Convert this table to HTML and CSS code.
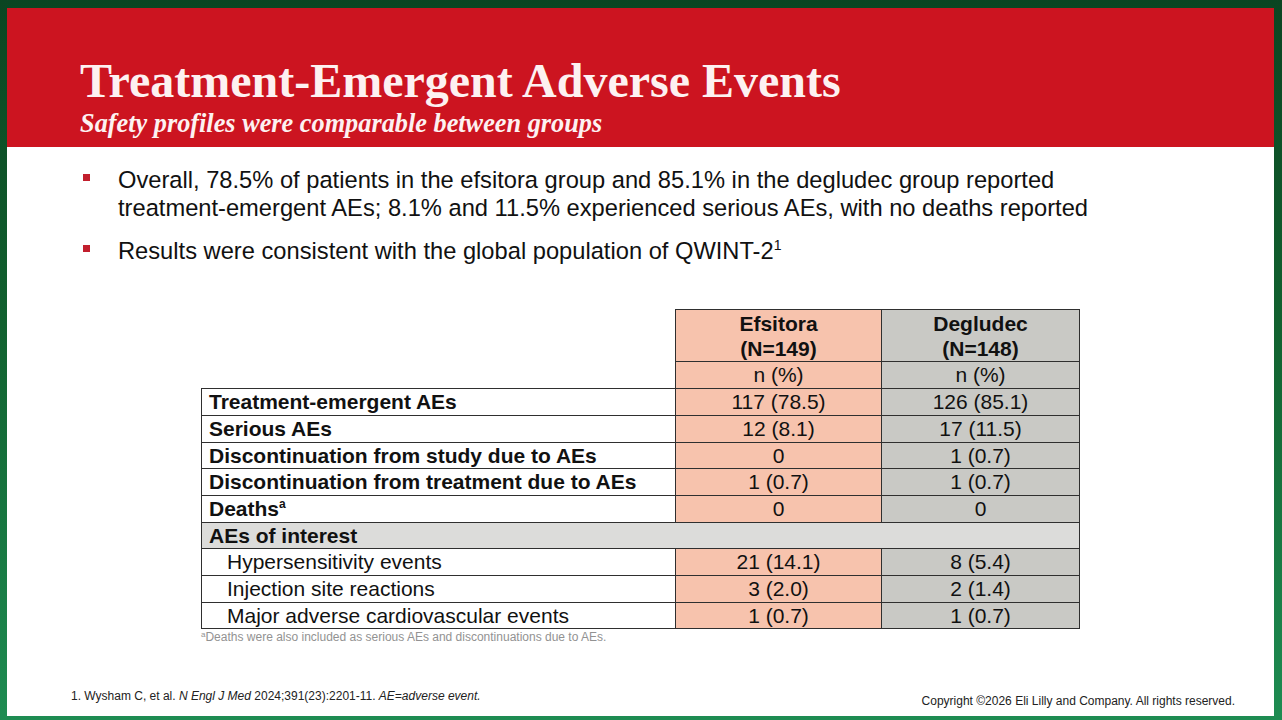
FILE: index.html
```html
<!DOCTYPE html>
<html lang="en">
<head>
<meta charset="utf-8">
<title>Treatment-Emergent Adverse Events</title>
<link rel="stylesheet" href="styles.css">
</head>
<body>
<div class="slide">
  <header class="banner">
    <h1 class="title">Treatment-Emergent Adverse Events</h1>
    <p class="subtitle">Safety profiles were comparable between groups</p>
  </header>
  <ul class="bullets">
    <li><span class="mark"></span><span>Overall, 78.5% of patients in the efsitora group and 85.1% in the degludec group reported treatment-emergent AEs; 8.1% and 11.5% experienced serious AEs, with no deaths reported</span></li>
    <li><span class="mark"></span><span>Results were consistent with the global population of QWINT-2<sup class="sup">1</sup></span></li>
  </ul>
  <div class="table-wrap">
    <table class="ae">
      <colgroup>
        <col class="c-label"><col class="c-efs"><col class="c-deg">
      </colgroup>
      <tr class="hrow">
        <td class="blank"></td>
        <th class="efs">Efsitora<br>(N=149)</th>
        <th class="deg">Degludec<br>(N=148)</th>
      </tr>
      <tr class="row">
        <td class="blank"></td>
        <td class="efs">n (%)</td>
        <td class="deg">n (%)</td>
      </tr>
      <tr class="row">
        <td class="label b">Treatment-emergent AEs</td>
        <td class="efs">117 (78.5)</td>
        <td class="deg">126 (85.1)</td>
      </tr>
      <tr class="row">
        <td class="label b">Serious AEs</td>
        <td class="efs">12 (8.1)</td>
        <td class="deg">17 (11.5)</td>
      </tr>
      <tr class="row short">
        <td class="label b">Discontinuation from study due to AEs</td>
        <td class="efs">0</td>
        <td class="deg">1 (0.7)</td>
      </tr>
      <tr class="row">
        <td class="label b">Discontinuation from treatment due to AEs</td>
        <td class="efs">1 (0.7)</td>
        <td class="deg">1 (0.7)</td>
      </tr>
      <tr class="row">
        <td class="label b">Deaths<sup class="supa">a</sup></td>
        <td class="efs">0</td>
        <td class="deg">0</td>
      </tr>
      <tr class="row short">
        <td class="label b group" colspan="3">AEs of interest</td>
      </tr>
      <tr class="row">
        <td class="label sub">Hypersensitivity events</td>
        <td class="efs">21 (14.1)</td>
        <td class="deg">8 (5.4)</td>
      </tr>
      <tr class="row">
        <td class="label sub">Injection site reactions</td>
        <td class="efs">3 (2.0)</td>
        <td class="deg">2 (1.4)</td>
      </tr>
      <tr class="row short">
        <td class="label sub">Major adverse cardiovascular events</td>
        <td class="efs">1 (0.7)</td>
        <td class="deg">1 (0.7)</td>
      </tr>
    </table>
    <p class="note"><sup class="supn">a</sup>Deaths were also included as serious AEs and discontinuations due to AEs.</p>
  </div>
  <footer class="foot">
    <p class="ref">1. Wysham C, et al. <i>N Engl J Med</i> 2024;391(23):2201-11. <i>AE=adverse event.</i></p>
    <p class="copy">Copyright ©2026 Eli Lilly and Company. All rights reserved.</p>
  </footer>
</div>
</body>
</html>
```
FILE: styles.css
```css
html, body {
  margin: 0;
  padding: 0;
}
body {
  width: 1282px;
  height: 720px;
  overflow: hidden;
  background: linear-gradient(180deg, #0b4522 0%, #11612f 45%, #1e8c52 100%);
  font-family: "Liberation Sans", Arial, sans-serif;
}
.slide {
  margin: 8px 8px 0 7px;
  width: 1267px;
  height: 708px;
  background: #ffffff;
  display: flex;
  flex-direction: column;
}
.banner {
  background: #cc1420;
  height: 139px;
  box-sizing: border-box;
  padding: 49px 0 0 73px;
  color: #fdf1f1;
  font-family: "Liberation Serif", "Times New Roman", serif;
}
.title {
  margin: 0;
  font-size: 48px;
  line-height: 48px;
  font-weight: bold;
}
.subtitle {
  margin: 6px 0 0 0;
  font-size: 26.3px;
  line-height: 26px;
  font-weight: bold;
  font-style: italic;
}
.bullets {
  list-style: none;
  margin: 0;
  padding: 19px 174px 0 76px;
  display: flex;
  flex-direction: column;
  gap: 15px;
  font-size: 23.7px;
  line-height: 28px;
  color: #111;
}
.bullets li {
  display: grid;
  grid-template-columns: 35px 1fr;
}
.mark {
  width: 7px;
  height: 7px;
  margin-top: 8px;
  background: #c21f2d;
}
.sup {
  font-size: 14px;
  vertical-align: 9px;
  line-height: 0;
}
.table-wrap {
  padding: 44px 0 0 194px;
}
.ae {
  border-collapse: collapse;
  table-layout: fixed;
  width: 878px;
  font-size: 21px;
  color: #111;
}
.c-label { width: 474px; }
.c-efs { width: 206px; }
.c-deg { width: 198px; }
.ae td, .ae th {
  padding: 0;
  border: 1.5px solid #2f2f2f;
  text-align: center;
  font-weight: normal;
  line-height: 26px;
  height: 27px;
  box-sizing: border-box;
}
.ae tr.short td {
  height: 26px;
  line-height: 25px;
}
.ae td.blank {
  border: none;
  background: transparent;
}
.hrow th {
  font-weight: bold;
  height: 52px;
  line-height: 25px;
  padding-top: 1px;
}
.ae .efs { background: #f7c3ad; }
.ae .deg { background: #c9c9c5; }
.ae td.label {
  text-align: left;
  padding-left: 7px;
  background: #ffffff;
}
.ae td.b { font-weight: bold; }
.ae td.sub { padding-left: 25px; }
.ae td.group { background: #dcdcda; }
.supa {
  font-size: 12px;
  vertical-align: 8px;
  line-height: 0;
}
.note {
  margin: 1px 0 0 0;
  font-size: 12px;
  line-height: 14px;
  color: #929292;
}
.supn {
  font-size: 8px;
  vertical-align: 4px;
  line-height: 0;
}
.foot {
  margin-top: auto;
  display: flex;
  justify-content: space-between;
  align-items: flex-end;
  padding: 0 39px 8px 64px;
  font-size: 12px;
  line-height: 14px;
  color: #222;
}
.ref {
  margin: 0 0 5px 0;
}
.copy {
  margin: 0;
}
```
